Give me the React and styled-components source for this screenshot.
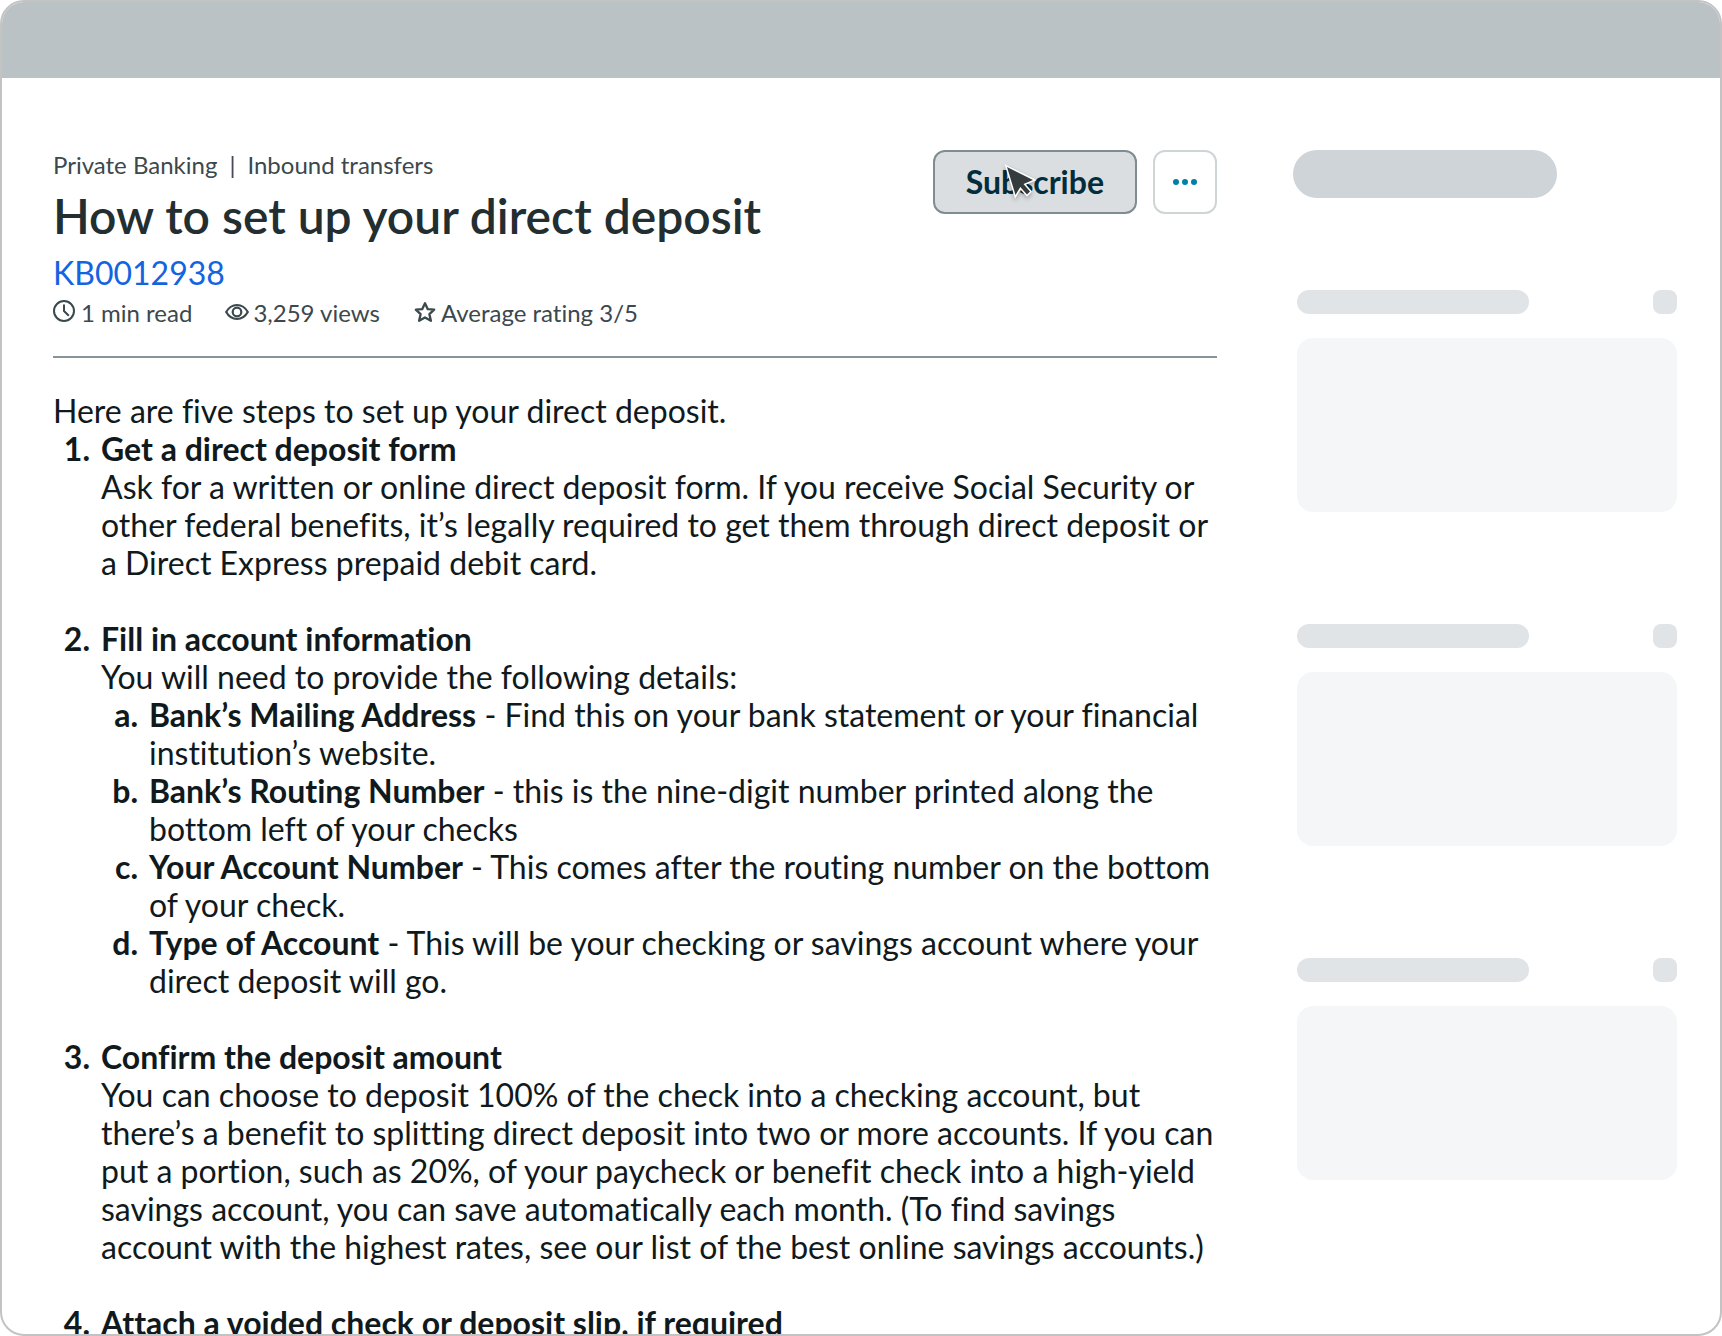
import React from "react";
import styled, { createGlobalStyle, css } from "styled-components";

const GlobalStyle = createGlobalStyle`
  *, *::before, *::after { box-sizing: border-box; }
  body {
    margin: 0;
    background: #ffffff;
    color: #10191c;
    font-family: Lato, "Liberation Sans", sans-serif;
    font-size: 32px;
    line-height: 38px;
    font-variant-ligatures: none;
  }
`;

const Frame = styled.div`
  display: flex;
  flex-direction: column;
  height: 100vh;
  overflow: hidden;
  border: 2px solid #c3c3c3;
  border-radius: 24px;
  background: #ffffff;
`;

const TopBar = styled.header`
  flex: none;
  height: 76px;
  background: #bac2c5;
`;

const Page = styled.div`
  display: grid;
  grid-template-columns: minmax(0, 1fr) 384px;
  column-gap: 76px;
  flex: 1;
  min-height: 0;
  padding: 72px 43px 0 51px;
`;

const Article = styled.main`
  min-width: 0;
`;

const ArticleHeader = styled.div`
  display: flex;
  justify-content: space-between;
  align-items: flex-start;
  gap: 16px;
  padding-bottom: 28px;
  border-bottom: 2px solid #87949a;
`;

const Heading = styled.div`
  display: flex;
  flex-direction: column;
  align-items: flex-start;
`;

const Breadcrumb = styled.nav`
  display: flex;
  gap: 12px;
  font-size: 24px;
  line-height: 30px;
  color: #3b484d;
`;

const Title = styled.h1`
  margin: 6px 0 8px;
  font-size: 48px;
  line-height: 60px;
  font-weight: 600;
  color: #232e31;
`;

const ArticleNumber = styled.a`
  color: #1464df;
  text-decoration: none;
`;

const MetaList = styled.ul`
  display: flex;
  gap: 33px;
  margin: 6px 0 0;
  padding: 0;
  list-style: none;
  font-size: 24px;
  line-height: 30px;
  color: #3b484d;
`;

const MetaItem = styled.li`
  display: flex;
  gap: 4px;

  svg {
    flex: none;
    width: 24px;
    height: 26px;
  }
`;

const Actions = styled.div`
  display: flex;
  flex: none;
  gap: 16px;
`;

const Button = styled.button`
  position: relative;
  display: flex;
  align-items: center;
  justify-content: center;
  height: 64px;
  padding: 0 31px;
  border: 2px solid #cfd5d7;
  border-radius: 12px;
  background: #ffffff;
  color: #0080a6;
  font: inherit;
  font-weight: 700;

  ${(p) =>
    p.$hovered &&
    css`
      border-color: #7f8c91;
      background: #dadee1;
      color: #032d3b;
    `}

  ${(p) =>
    p.$square &&
    css`
      width: 64px;
      padding: 0;
    `}
`;

const Pointer = styled.svg`
  position: absolute;
  top: 8px;
  left: 66px;
  width: 44px;
  height: 44px;
  pointer-events: none;
  filter: drop-shadow(0 2px 2px rgba(0, 0, 0, 0.3));
`;

const Body = styled.div`
  padding-top: 34px;
`;

const Paragraph = styled.p`
  margin: 0;
`;

const Steps = styled.ol`
  display: flex;
  flex-direction: column;
  gap: ${(p) => (p.$nested ? "0" : "38px")};
  margin: 0;
  padding: 0;
  list-style: none;
`;

const Step = styled.li`
  display: grid;
  grid-template-columns: 37px minmax(0, 1fr);
  column-gap: 11px;
`;

const Marker = styled.span`
  font-weight: 700;
  text-align: right;
`;

const StepTitle = styled.h2`
  margin: 0;
  font-size: inherit;
  font-weight: 700;
`;

const Term = styled.strong`
  font-weight: 700;
`;

const Sidebar = styled.aside`
  display: flex;
  flex-direction: column;
`;

const Pill = styled.div`
  width: 264px;
  height: 48px;
  margin-bottom: 92px;
  border-radius: 24px;
  background: #ced4d7;
`;

const Cards = styled.div`
  display: flex;
  flex-direction: column;
  gap: 112px;
  padding-left: 4px;
`;

const CardHeader = styled.div`
  display: flex;
  justify-content: space-between;
  margin-bottom: 24px;
`;

const Bar = styled.div`
  width: ${(p) => (p.$short ? "24px" : "232px")};
  height: 24px;
  border-radius: ${(p) => (p.$short ? "8px" : "12px")};
  background: #e0e4e7;
`;

const CardBody = styled.div`
  height: 174px;
  border-radius: 16px;
  background: #f4f6f8;
`;

const ClockIcon = () => (
  <svg viewBox="0 0 24 26" fill="none" stroke="currentColor" strokeWidth="2" aria-hidden="true">
    <circle cx="11" cy="13" r="10" />
    <path d="M11 6.6V13L15.8 17.8" />
  </svg>
);

const EyeIcon = () => (
  <svg viewBox="0 0 24 26" fill="none" stroke="currentColor" strokeWidth="2.2" aria-hidden="true">
    <path d="M1.2 14C3.8 9.4 7.5 7 12 7S20.2 9.4 22.8 14C20.2 18.6 16.5 21 12 21S3.8 18.6 1.2 14Z" />
    <circle cx="12" cy="14" r="4.3" />
  </svg>
);

const StarIcon = () => (
  <svg viewBox="0 0 24 26" fill="none" stroke="currentColor" strokeWidth="2.3" strokeLinejoin="round" aria-hidden="true">
    <path d="M12 5.2L14.8 11.2L21.2 11.7L16.4 16.2L17.9 22.8L12 19.4L6.1 22.8L7.6 16.2L2.8 11.7L9.2 11.2Z" />
  </svg>
);

const DotsIcon = () => (
  <svg width="24" height="6" viewBox="0 0 24 6" fill="currentColor" aria-hidden="true">
    <circle cx="3" cy="3" r="3" />
    <circle cx="12" cy="3" r="3" />
    <circle cx="21" cy="3" r="3" />
  </svg>
);

const PointerIcon = () => (
  <Pointer viewBox="0 0 44 44" aria-hidden="true">
    <path
      d="M6 7L32 20L22.5 24L29 31.5L26 34.5L19.3 27L14.5 35Z"
      fill="#353c3e"
      stroke="#ffffff"
      strokeWidth="3"
      paintOrder="stroke"
    />
  </Pointer>
);

const bankDetails = [
  ["a.", "Bank’s Mailing Address", "Find this on your bank statement or your financial institution’s website."],
  ["b.", "Bank’s Routing Number", "this is the nine-digit number printed along the bottom left of your checks"],
  ["c.", "Your Account Number", "This comes after the routing number on the bottom of your check."],
  ["d.", "Type of Account", "This will be your checking or savings account where your direct deposit will go."],
];

function ArticleStep({ number, title, children }) {
  return (
    <Step>
      <Marker>{number}</Marker>
      <div>
        <StepTitle>{title}</StepTitle>
        {children}
      </div>
    </Step>
  );
}

export default function App() {
  return (
    <>
      <GlobalStyle />
      <Frame>
        <TopBar />
        <Page>
          <Article>
            <ArticleHeader>
              <Heading>
                <Breadcrumb aria-label="Breadcrumb">
                  <span>Private Banking</span>
                  <span>|</span>
                  <span>Inbound transfers</span>
                </Breadcrumb>
                <Title>How to set up your direct deposit</Title>
                <ArticleNumber href="#KB0012938">KB0012938</ArticleNumber>
                <MetaList>
                  <MetaItem><ClockIcon /><span>1 min read</span></MetaItem>
                  <MetaItem><EyeIcon /><span>3,259 views</span></MetaItem>
                  <MetaItem><StarIcon /><span>Average rating 3/5</span></MetaItem>
                </MetaList>
              </Heading>
              <Actions>
                <Button type="button" $hovered>
                  Subscribe
                  <PointerIcon />
                </Button>
                <Button type="button" $square aria-label="More actions">
                  <DotsIcon />
                </Button>
              </Actions>
            </ArticleHeader>
            <Body>
              <Paragraph>Here are five steps to set up your direct deposit.</Paragraph>
              <Steps>
                <ArticleStep number="1." title="Get a direct deposit form">
                  <Paragraph>
                    Ask for a written or online direct deposit form. If you receive Social Security or other
                    federal benefits, it’s legally required to get them through direct deposit or a Direct
                    Express prepaid debit card.
                  </Paragraph>
                </ArticleStep>
                <ArticleStep number="2." title="Fill in account information">
                  <Paragraph>You will need to provide the following details:</Paragraph>
                  <Steps $nested>
                    {bankDetails.map(([letter, term, text]) => (
                      <Step key={letter}>
                        <Marker>{letter}</Marker>
                        <Paragraph><Term>{term}</Term> - {text}</Paragraph>
                      </Step>
                    ))}
                  </Steps>
                </ArticleStep>
                <ArticleStep number="3." title="Confirm the deposit amount">
                  <Paragraph>
                    You can choose to deposit 100% of the check into a checking account, but there’s a benefit
                    to splitting direct deposit into two or more accounts. If you can put a portion, such as
                    20%, of your paycheck or benefit check into a high-yield savings account, you can save
                    automatically each month. (To find savings account with the highest rates, see our list of
                    the best online savings accounts.)
                  </Paragraph>
                </ArticleStep>
                <ArticleStep number="4." title="Attach a voided check or deposit slip, if required" />
              </Steps>
            </Body>
          </Article>
          <Sidebar>
            <Pill />
            <Cards>
              {[0, 1, 2].map((card) => (
                <div key={card}>
                  <CardHeader>
                    <Bar />
                    <Bar $short />
                  </CardHeader>
                  <CardBody />
                </div>
              ))}
            </Cards>
          </Sidebar>
        </Page>
      </Frame>
    </>
  );
}
